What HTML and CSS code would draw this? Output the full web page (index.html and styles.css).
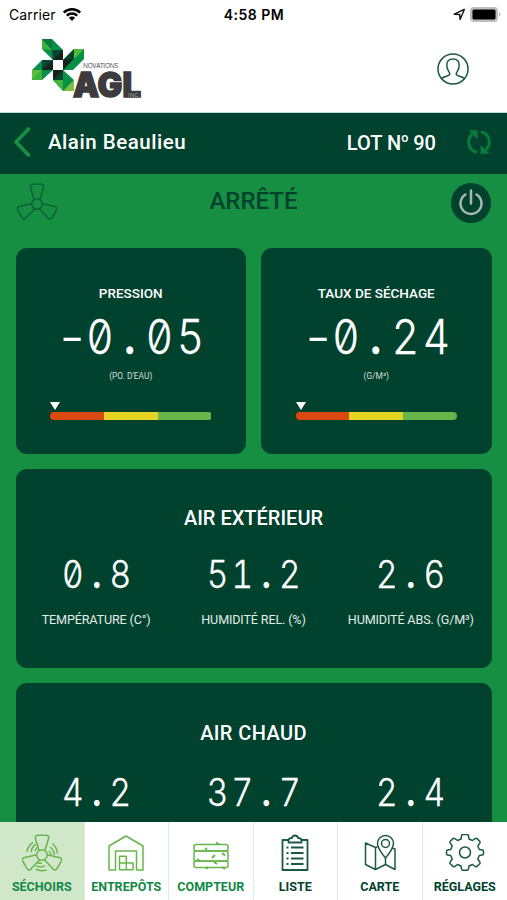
FILE: index.html
```
<!DOCTYPE html>
<html lang="fr">
<head>
  <meta charset="UTF-8">
  <title>Séchoirs</title>
  <link rel="stylesheet" href="styles.css">
</head>
<body>
  <div class="app">
    <div class="status">
      <div class="carrier">
        <span>Carrier</span>
        <svg width="20" height="15" viewBox="0 0 20 15">
          <path d="M1.8 5.6a11.7 11.7 0 0 1 16.4 0M4.8 8.6a7.4 7.4 0 0 1 10.4 0" fill="none" stroke="#000" stroke-width="2.5"/>
          <path d="M6.9 10.8a4.4 4.4 0 0 1 6.2 0L10 14z"/>
        </svg>
      </div>
      <div class="clock">4:58 PM</div>
      <div class="indicators">
        <svg width="13" height="13" viewBox="0 0 13 13"><path d="M1.3 6.2 11.3 1.4 7.1 11.4 6.7 6.5z" fill="none" stroke="#111" stroke-width="1.4" stroke-linejoin="round"/></svg>
        <svg width="31" height="15" viewBox="0 0 31 15">
          <rect width="28" height="15" rx="4" fill="#bdbdbd"/>
          <path d="M29 5q3 2.500 0 5z" fill="#bdbdbd"/>
          <rect x="2.500" y="2.500" width="23" height="10" rx="1.500"/>
        </svg>
      </div>
    </div>

    <div class="header">
      <svg class="logo" width="112" height="64" viewBox="31 37 112 64">
        <path fill="#079046" d="M42 39h10l11 11v10H53L42 49z"/>
        <path fill="#3db23e" d="M42 39v10l10 1z"/>
        <path fill="#067a3f" d="M42 39h10v11z"/>
        <path fill="#16221c" d="M53 60V50h10v10z"/>
        <path fill="#07462e" d="m53 60-1-10h11z"/>
        <path fill="#079046" d="M74 49h10v10L73 70H63V60z"/>
        <path fill="#55b83e" d="M74 49h10L74 59z"/>
        <path fill="#07462e" d="M74 49v10L63 70V60z"/>
        <path fill="#16221c" d="M63 60l10-1-10 11z"/>
        <path fill="#079046" d="M32 80V70l10-10h11v10L42 80z"/>
        <path fill="#5cbd3d" d="M32 80V70h10z"/>
        <path fill="#3db23e" d="M32 80h10V70z"/>
        <path fill="#07462e" d="M42 60h11v10H42z"/>
        <path fill="#16221c" d="M53 60v10H42z"/>
        <path fill="#079046" d="M53 70h10l11 10v11H63L53 80z"/>
        <path fill="#16221c" d="M53 70h10v10H53z"/>
        <path fill="#07462e" d="M53 80 63 70v10z"/>
        <path fill="#45b43e" d="M63 91V80L53 80z"/>
        <path fill="#7bc142" d="M63 91 74 80v11z"/>
        <path fill="#fff" d="M53 60h10v10H53z"/>
        <text class="logo-top" x="83" y="68" textLength="35">NOVATIONS</text>
        <text class="logo-main" x="73" y="97.300" textLength="68" lengthAdjust="spacingAndGlyphs">AGL</text>
        <text class="logo-inc" x="128" y="97">INC.</text>
      </svg>
      <svg class="user" width="32" height="32" viewBox="0 0 32 32">
        <circle cx="16" cy="16" r="15"/>
        <path d="M4.500 25.500c2-2.200 8-2 8.300-4.300.2-2.300-3-3.200-3-9C9.800 8.300 12.200 6 16 6s6.200 2.300 6.200 6.200c0 5.800-3.200 6.700-3 9 .3 2.300 6.300 2.100 8.300 4.300"/>
      </svg>
    </div>

    <div class="titlebar">
      <svg class="back" width="18" height="30" viewBox="0 0 18 30"><path d="M15.500 2 3 15l12.500 13"/></svg>
      <div class="name">Alain Beaulieu</div>
      <div class="lot">LOT N<sup>o</sup> 90</div>
      <svg class="refresh" width="26" height="26" viewBox="0 0 26 26">
        <path class="arc" d="M11 23.300A10.500 10.500 0 0 1 6.500 5M15 2.700A10.500 10.500 0 0 1 19.500 21"/>
        <path class="tip" d="M2.500 1.200h9v9zM23.500 24.800h-9v-9z"/>
      </svg>
    </div>

    <div class="content">
      <div class="state">
        <svg class="fan" width="40" height="38" viewBox="0 0 40 38">
          <circle cx="20" cy="21" r="5.300"/>
          <path id="blade" d="M17 16.500 13.300 4Q12.800 1.200 16 1.200h8Q27.200 1.200 26.700 4L23 16.500"/>
          <use href="#blade" transform="rotate(120 20 21)"/>
          <use href="#blade" transform="rotate(240 20 21)"/>
        </svg>
        <div class="state-text">ARRÊTÉ</div>
        <div class="power">
          <svg width="26" height="28" viewBox="0 0 26 28"><path d="M7.500 5.500a10.500 10.500 0 1 0 11 0M13 1.500v13"/></svg>
        </div>
      </div>

      <div class="gauges">
        <div class="card gauge">
          <div class="gauge-title">PRESSION</div>
          <div class="number big"><span class="minus">-</span>0<span>.</span>05</div>
          <div class="unit">(PO. D'EAU)</div>
          <div class="pointer"></div>
          <div class="bar"><i class="red"></i><i class="yellow"></i><i class="green"></i></div>
        </div>
        <div class="card gauge">
          <div class="gauge-title">TAUX DE SÉCHAGE</div>
          <div class="number big"><span class="minus">-</span>0<span>.</span>24</div>
          <div class="unit">(G/M³)</div>
          <div class="pointer"></div>
          <div class="bar"><i class="red"></i><i class="yellow"></i><i class="green"></i></div>
        </div>
      </div>

      <div class="card air">
        <div class="air-title">AIR EXTÉRIEUR</div>
        <div class="values">
          <div class="value"><div class="number">0<span>.</span>8</div><div class="label">TEMPÉRATURE (C°)</div></div>
          <div class="value"><div class="number">51<span>.</span>2</div><div class="label">HUMIDITÉ REL. (%)</div></div>
          <div class="value"><div class="number">2<span>.</span>6</div><div class="label">HUMIDITÉ ABS. (G/M³)</div></div>
        </div>
      </div>

      <div class="card air">
        <div class="air-title chaud">AIR CHAUD</div>
        <div class="values">
          <div class="value"><div class="number">4<span>.</span>2</div></div>
          <div class="value"><div class="number">37<span>.</span>7</div></div>
          <div class="value"><div class="number">2<span>.</span>4</div></div>
        </div>
      </div>
    </div>

    <div class="tabs">
      <div class="tab light active">
        <svg width="40" height="38" viewBox="0 0 40 38">
          <circle cx="20" cy="21" r="5.300"/>
          <use href="#blade"/>
          <use href="#blade" transform="rotate(120 20 21)"/>
          <use href="#blade" transform="rotate(240 20 21)"/>
          <g id="wind"><path d="M28 13q4 3 4.500 8M30.500 9.500q4.500 4 5 10M27 17q1.500 1.500 2 4"/></g>
          <use href="#wind" transform="rotate(120 20 21)"/>
          <use href="#wind" transform="rotate(240 20 21)"/>
        </svg>
        <span>SÉCHOIRS</span>
      </div>
      <div class="tab light">
        <svg width="40" height="38" viewBox="0 0 40 38">
          <path d="M3 36V12L20 2l17 10v24h-6.500V17h-21v19z"/>
          <path d="M13.500 29h6.800v6.800h-6.800zM20.300 29h6.800v6.800h-6.800zM13.500 22.200h6.800V29h-6.800z"/>
        </svg>
        <span>ENTREPÔTS</span>
      </div>
      <div class="tab light">
        <svg width="40" height="38" viewBox="0 0 40 38">
          <rect x="3" y="10.500" width="34" height="6.500" rx="2"/>
          <rect x="3" y="17" width="34" height="10" rx="2"/>
          <rect x="3" y="27" width="34" height="6.500" rx="2"/>
          <path d="m25 8.500 3 2M14 16l2-2M21 24l3-3M31 19l3 2.500M6 25l3 2M23 28l3 2M15 35l2-2M31 33l3 2" stroke-width="1.800"/>
        </svg>
        <span>COMPTEUR</span>
      </div>
      <div class="tab">
        <svg width="40" height="38" viewBox="0 0 40 38">
          <path d="M13.500 6H7.500v30h25V6h-6" stroke-width="1.800"/>
          <path d="M13.500 8.500h13V6q-.5-2-3.500-2-.5-2.500-3-2.500T17 4q-3 0-3.500 2z" stroke-width="1.800"/>
          <path d="M16 13.500h12.500M16 19h12.500M16 24.500h12.500M16 30h12.500M11.500 13.500h2M11.500 19h2M11.500 24.500h2M11.500 30h2" stroke-width="1.800"/>
        </svg>
        <span>LISTE</span>
      </div>
      <div class="tab">
        <svg width="40" height="38" viewBox="0 0 40 38">
          <path d="M15.500 13.500 5.500 9v21.500l10 5 10-5 9.500 5V15l-3-1M15.500 13.500v22M25.500 24v6.500M15.500 13.500l2-.8"/>
          <path d="M25.500 24q-8-9.500-8-14.500a8 8 0 0 1 16 0q0 5-8 14.500z"/>
          <circle cx="25.500" cy="9.500" r="4"/>
        </svg>
        <span>CARTE</span>
      </div>
      <div class="tab">
        <svg width="40" height="38" viewBox="0 2 40 38">
          <path d="M17.800 2.500h4.400q1 0 1.200 1l.6 3.500 3.500 1.500 3-2.100q.8-.5 1.500.2l2.700 2.700q.7.700.2 1.500L32.800 14l1.500 3.500 3.200.6q1 .2 1 1.200v2.400q0 1-1 1.200l-3.200.6L32.800 27l2.100 3.200q.5.800-.2 1.500L32 34.400q-.7.700-1.500.2l-3-2.100L24 34l-.6 3.200q-.2 1-1.200 1h-4.400q-1 0-1.200-1L16 34l-3.500-1.500-3 2.100q-.8.500-1.500-.2l-2.700-2.700q-.7-.7-.2-1.500L7.200 27l-1.500-3.500-3.200-.6q-1-.2-1-1.200v-2.400q0-1 1-1.200l3.200-.6L7.200 14l-2.100-3.200q-.5-.8.2-1.500L8 6.600q.7-.7 1.500-.2l3 2.100L16 7l.6-3.500q.2-1 1.200-1z"/>
          <circle cx="20" cy="20.500" r="5.500"/>
        </svg>
        <span>RÉGLAGES</span>
      </div>
    </div>
  </div>
</body>
</html>
```
FILE: styles.css
```
* {
  box-sizing: border-box;
}
body {
  margin: 0;
  background: #fff;
  font-family: Roboto, "Liberation Sans", sans-serif;
}
svg {
  display: block;
  flex: none;
}
.app {
  width: 507px;
  height: 900px;
  display: flex;
  flex-direction: column;
  overflow: hidden;
}
.status {
  height: 28px;
  padding: 0 6px 0 9px;
  display: grid;
  grid-template-columns: 1fr auto 1fr;
  align-items: center;
  font-family: Inter, sans-serif;
  font-size: 14px;
}
.carrier {
  display: flex;
  align-items: center;
  gap: 6px;
  letter-spacing: 0.1px;
}
.clock {
  margin-right: 2px;
  font-weight: 600;
  letter-spacing: 0.5px;
}
.indicators {
  display: flex;
  align-items: center;
  justify-content: flex-end;
  gap: 4px;
}
.header {
  height: 85px;
  padding: 9px 38px 0 31px;
  display: flex;
  justify-content: space-between;
  border-bottom: 1px solid #b9ddd0;
}
.logo {
  overflow: visible;
}
.logo-top {
  font: 6.5px "Open Sans", sans-serif;
  fill: #444;
}
.logo-main {
  font: 900 34px Inter, sans-serif;
  fill: #3d3b3e;
  stroke: #3d3b3e;
  stroke-width: 1.5px;
}
.logo-inc {
  font: 6px "Open Sans", sans-serif;
  fill: #aaa;
}
.user {
  margin-top: 16px;
  fill: none;
  stroke: #1b5947;
  stroke-width: 1.5;
}
.titlebar {
  height: 61px;
  padding: 0 15px 3px 13px;
  background: #01422f;
  color: #fff;
  display: flex;
  align-items: center;
}
.back {
  fill: none;
  stroke: #168f43;
  stroke-width: 3.6;
  stroke-linecap: round;
}
.name {
  margin: -1px auto 0 17px;
  font-size: 20.5px;
  font-weight: 500;
  letter-spacing: 0.52px;
}
.lot {
  margin: 2px 30px 0 0;
  font-size: 20px;
  font-weight: 500;
}
.lot sup {
  font-size: 12.5px;
  line-height: 0;
  vertical-align: 8px;
}
.refresh .arc {
  fill: none;
  stroke: #087b3e;
  stroke-width: 3;
}
.refresh .tip {
  fill: #087b3e;
}
.content {
  height: 648px;
  padding: 0 15.5px;
  background: #168f43;
  overflow: hidden;
}
.state {
  height: 74px;
  padding: 9px 1px 0;
  display: grid;
  grid-template-columns: 1fr auto 1fr;
}
.fan {
  fill: none;
  stroke: #075c38;
  stroke-width: 1.3;
}
.state-text {
  padding-top: 4px;
  color: #01422f;
  font-size: 24px;
  line-height: 28px;
  font-weight: 500;
}
.power {
  width: 40px;
  height: 40px;
  border-radius: 50%;
  background: #01422f;
  justify-self: end;
  display: flex;
  align-items: center;
  justify-content: center;
}
.power svg {
  fill: none;
  stroke: #aab8b1;
  stroke-width: 2.5;
  stroke-linecap: round;
}
.gauges {
  display: flex;
  gap: 15px;
}
.card {
  background: #01422f;
  border-radius: 11px;
  color: #fff;
  text-align: center;
}
.gauge {
  flex: 1;
  height: 206px;
  padding: 37px 34.5px 0;
}
.gauge-title {
  font-size: 13.5px;
  line-height: 16px;
  font-weight: 500;
}
/* fixed-pitch figures with a slashed zero */
.number {
  font-family: Inter, sans-serif;
  font-size: 38px;
  line-height: 40px;
  font-weight: 300;
  -webkit-text-stroke: 0.3px #fff;
  font-feature-settings: "tnum", "zero";
  letter-spacing: 3.5px;
  text-indent: 3.5px;
  white-space: nowrap;
  transform: scaleX(0.88);
}
.number span {
  display: inline-block;
  width: 0.68em;
  margin-left: -0.04em;
  margin-right: 0.04em;
  letter-spacing: 0;
  text-indent: 0;
  font-weight: 600;
}
.number .minus {
  margin: 0;
  font-weight: 300;
  transform: scaleX(1.3);
}
.big {
  margin: 8px -30px 0;
  font-size: 48px;
  line-height: 56px;
  letter-spacing: 4px;
  text-indent: 4px;
}
.unit {
  margin-top: 6px;
  font-size: 8.4px;
  line-height: 10px;
  color: #d0ded8;
}
.pointer {
  width: 0;
  margin-top: 21px;
  border: 5px solid transparent;
  border-top: 8px solid #fff;
  border-bottom: 0;
}
.bar {
  height: 8px;
  margin-top: 2px;
  display: flex;
  border-radius: 4px;
  overflow: hidden;
}
.bar i {
  flex: 1;
}
.red {
  background: #db4810;
}
.yellow {
  background: #e6d423;
}
.green {
  background: #68b54b;
}
.air {
  height: 199px;
  margin-top: 15px;
  padding-top: 36px;
}
.air-title {
  font-size: 20px;
  line-height: 26px;
  font-weight: 500;
}
.chaud {
  padding-top: 1px;
  margin-bottom: 26px;
  letter-spacing: 0.4px;
}
.values {
  margin-top: 23px;
  padding: 0 2px;
  display: grid;
  grid-template-columns: repeat(3, 1fr);
}
.label {
  margin-top: 18px;
  font-size: 12.6px;
  line-height: 16px;
  letter-spacing: -0.15px;
  color: #e3ece8;
  white-space: nowrap;
}
.tabs {
  height: 78px;
  display: grid;
  grid-template-columns: repeat(6, 1fr);
}
.tab {
  padding-top: 12px;
  background: #fff;
  color: #01422f;
  border-right: 1px solid #d9eee5;
  display: flex;
  flex-direction: column;
  align-items: center;
  font-size: 12.5px;
  font-weight: 700;
}
.tab:last-child {
  border-right: 0;
}
.tab svg {
  fill: none;
  stroke: #1b5947;
  stroke-width: 1.5;
  stroke-linejoin: round;
}
.tab span {
  margin-top: 7px;
  line-height: 16px;
}
.light {
  color: #128846;
}
.light svg {
  stroke: #67b64b;
}
.active {
  background: #d0e8c9;
}
```
